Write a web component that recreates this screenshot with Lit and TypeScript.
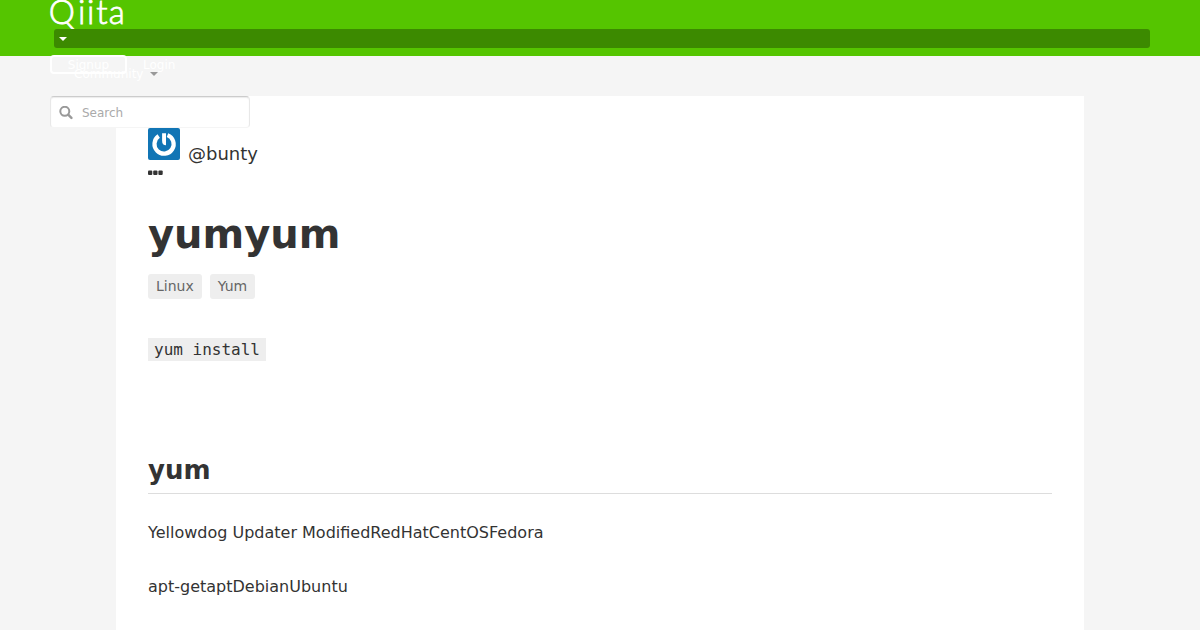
import { LitElement, html, css } from "lit";
import { customElement } from "lit/decorators.js";

@customElement("app-header")
class AppHeader extends LitElement {
  static styles = css`
    :host { display: block; height: 56px; background: #55c500; font-size: 12px; line-height: 18px; color: #fff; }
    .inner { display: flex; flex-direction: column; align-items: flex-start; width: 1100px; margin: 0 auto; }
    .logo { display: block; width: 76px; height: 29px; overflow: visible; }
    .logo text { font-family: Lato, sans-serif; font-weight: 300; font-size: 33px; fill: #fff; stroke: #fff; stroke-width: 0.8px; }
    .bar { box-sizing: border-box; display: flex; align-items: center; align-self: stretch; height: 19px; margin-left: 4px; padding: 1px 0 0 5px; border-radius: 3px; background: #3c8a00; }
    .caret { width: 0; height: 0; border: 4px solid transparent; border-top-color: currentColor; border-bottom: 0; }
    .links { position: relative; display: flex; align-items: center; height: 19px; margin-top: 7px; gap: 16px; }
    .signup { box-sizing: border-box; display: flex; align-items: center; justify-content: center; width: 77px; height: 19px; border: 2px solid #fff; border-radius: 4px; }
    .community { position: absolute; left: 24px; top: 10px; display: flex; align-items: center; gap: 7px; }
    .community .caret { color: #999; }
    .search { box-sizing: border-box; display: flex; align-items: center; gap: 9px; width: 200px; height: 32px; margin-top: 22px; padding: 1px 8px 0; background: #fff; border: 1px solid #e8e8e8; border-top-color: #ccc; border-bottom-color: #f5f5f5; border-radius: 4px; color: #aaa; box-shadow: inset 0 1px 1px rgba(0,0,0,.08); }
    .search svg { width: 14px; height: 14px; }
  `;
  render() {
    return html`<div class="inner">
      <svg class="logo" viewBox="0 0 76 29"><text x="-1.3 28 37 46.2 58.8" y="24">Qiita</text></svg>
      <div class="bar"><span class="caret"></span></div>
      <div class="links">
        <span class="signup">Signup</span><span>Login</span>
        <span class="community">Community <span class="caret"></span></span>
      </div>
      <div class="search">
        <svg viewBox="0 0 14 14" fill="none" stroke="#999" stroke-width="2"><circle cx="5.8" cy="5.3" r="4.5"/><path d="M9.2 8.7L12.4 11.9" stroke-width="2.4" stroke-linecap="round"/></svg>
        <span>Search</span>
      </div>
    </div>`;
  }
}

@customElement("app-article")
class AppArticle extends LitElement {
  static styles = css`
    :host { box-sizing: border-box; display: block; width: 968px; height: 534px; margin: 96px auto 0; padding: 32px; background: #fff; color: #333; overflow: hidden; }
    .author { display: flex; gap: 8px; height: 42px; font-size: 18px; line-height: 26px; }
    .name { padding-top: 13px; }
    .avatar { width: 32px; height: 32px; }
    .dots { display: block; width: 15px; height: 5px; }
    h1 { margin: 31px 0 0; font-size: 40px; line-height: 56px; }
    .tags { display: flex; gap: 8px; margin-top: 12px; font-size: 14px; line-height: 25px; color: #666; }
    .tag { padding: 0 8px; border-radius: 3px; background: #eee; }
    .code { display: flex; margin-top: 39px; }
    code { padding: 0 6px; background: #eee; font: 16px/23px "DejaVu Sans Mono", monospace; }
    h2 { margin: 92px 0 0; padding-bottom: 5px; border-bottom: 1px solid #ddd; font-size: 26px; line-height: 35px; }
    p { margin: 24px 0 0; font-size: 16px; line-height: 30px; }
  `;
  render() {
    return html`
      <div class="author">
        <svg class="avatar" viewBox="0 0 32 32"><rect width="32" height="32" rx="2" fill="#1175b5"/><path d="M10.7 8.1A9.6 9.6 0 1 0 19.5 7.1" fill="none" stroke="#fff" stroke-width="4.2"/><path d="M14.1 5.2H18V17.2Q14.1 17.2 14.1 13Z" fill="#fff"/></svg>
        <span class="name">@bunty</span>
      </div>
      <svg class="dots" viewBox="0 0 15 5" fill="#333"><rect y=".5" width="4.3" height="4.4" rx="1"/><rect x="5.2" y=".5" width="4.3" height="4.4" rx="1"/><rect x="10.4" y=".5" width="4.3" height="4.4" rx="1"/></svg>
      <h1>yumyum</h1>
      <div class="tags"><span class="tag">Linux</span><span class="tag">Yum</span></div>
      <div class="code"><code>yum install</code></div>
      <h2>yum</h2>
      <p>Yellowdog Updater ModifiedRedHatCentOSFedora</p>
      <p>apt-getaptDebianUbuntu</p>`;
  }
}

@customElement("app-root")
class AppRoot extends LitElement {
  static styles = css`
    :host { display: grid; width: 1200px; height: 630px; overflow: hidden; background: #f5f5f5; font-family: "DejaVu Sans", sans-serif; }
    .layer { grid-area: 1 / 1; }
    .top { z-index: 1; }
  `;
  render() {
    return html`<app-article class="layer"></app-article><app-header class="layer top"></app-header>`;
  }
}
